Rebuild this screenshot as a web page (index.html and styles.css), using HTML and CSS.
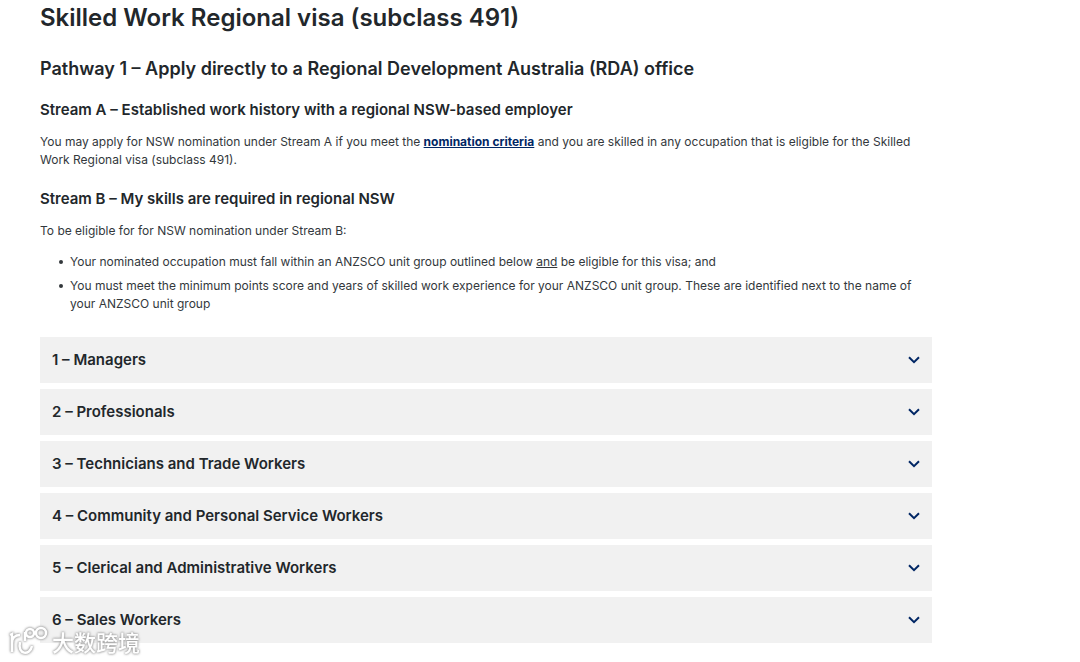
FILE: index.html
```html
<!DOCTYPE html>
<html lang="en">
<head>
  <meta charset="UTF-8">
  <meta name="viewport" content="width=device-width, initial-scale=1.0">
  <title>Skilled Work Regional visa (subclass 491)</title>
  <link rel="stylesheet" href="styles.css">
</head>
<body>
  <main class="content">
    <h1>Skilled Work Regional visa (subclass 491)</h1>
    <h2>Pathway 1 – Apply directly to a Regional Development Australia (RDA) office</h2>

    <h3>Stream A – Established work history with a regional NSW-based employer</h3>
    <p>You may apply for NSW nomination under Stream A if you meet the <a href="#">nomination criteria</a> and you are skilled in any occupation that is eligible for the Skilled Work Regional visa (subclass 491).</p>

    <h3>Stream B – My skills are required in regional NSW</h3>
    <p>To be eligible for for NSW nomination under Stream B:</p>
    <ul>
      <li>Your nominated occupation must fall within an ANZSCO unit group outlined below <u>and</u> be eligible for this visa; and</li>
      <li>You must meet the minimum points score and years of skilled work experience for your ANZSCO unit group. These are identified next to the name of your ANZSCO unit group</li>
    </ul>

    <div class="accordion">
      <button type="button" class="accordion-title" aria-expanded="false">
        1 – Managers
        <svg class="chevron" viewBox="0 0 12 8" aria-hidden="true"><path d="M1 1.300 6 6.200l5-4.900"/></svg>
      </button>
      <button type="button" class="accordion-title" aria-expanded="false">
        2 – Professionals
        <svg class="chevron" viewBox="0 0 12 8" aria-hidden="true"><path d="M1 1.300 6 6.200l5-4.900"/></svg>
      </button>
      <button type="button" class="accordion-title" aria-expanded="false">
        3 – Technicians and Trade Workers
        <svg class="chevron" viewBox="0 0 12 8" aria-hidden="true"><path d="M1 1.300 6 6.200l5-4.900"/></svg>
      </button>
      <button type="button" class="accordion-title" aria-expanded="false">
        4 – Community and Personal Service Workers
        <svg class="chevron" viewBox="0 0 12 8" aria-hidden="true"><path d="M1 1.300 6 6.200l5-4.900"/></svg>
      </button>
      <button type="button" class="accordion-title" aria-expanded="false">
        5 – Clerical and Administrative Workers
        <svg class="chevron" viewBox="0 0 12 8" aria-hidden="true"><path d="M1 1.300 6 6.200l5-4.900"/></svg>
      </button>
      <button type="button" class="accordion-title" aria-expanded="false">
        6 – Sales Workers
        <svg class="chevron" viewBox="0 0 12 8" aria-hidden="true"><path d="M1 1.300 6 6.200l5-4.900"/></svg>
      </button>
    </div>
  </main>

  <div class="watermark">
    <svg class="watermark-logo" viewBox="0 0 40 30" aria-hidden="true">
      <path d="M2 9 4 8V26M4 17C4 12 7 9 12 9M12 16C9 29 22 30 24 20"/>
      <path d="M17 15V6"/>
      <circle cx="22" cy="7" r="4"/>
      <circle cx="33" cy="7" r="5"/>
    </svg>
    <span>大数跨境</span>
  </div>
</body>
</html>
```

FILE: styles.css
```css
* {
  box-sizing: border-box;
}
body {
  margin: 0;
  background-color: #fff;
  color: #22272b;
  font-family: Inter, "Liberation Sans", sans-serif;
  font-size: 12px;
  line-height: 18px;
  position: relative;
}
.content {
  max-width: 932px;
  padding: 3px 0 20px 40px;
}
h1, h2, h3, p, ul {
  margin: 0;
}
h1 {
  font-size: 24px;
  line-height: 30px;
  font-weight: 600;
  margin-bottom: 24px;
}
h2 {
  font-size: 18px;
  line-height: 24px;
  font-weight: 600;
  margin-bottom: 19px;
}
h3 {
  font-size: 15px;
  line-height: 20px;
  font-weight: 600;
  margin-bottom: 13px;
}
p {
  color: #33383c;
  padding-right: 12px;
}
p + h3 {
  margin-top: 20px;
}
a {
  color: #002664;
  font-weight: 700;
}
ul {
  color: #33383c;
  margin-top: 13px;
  padding: 0 12px 0 30px;
  list-style: none;
}
li::before {
  content: "";
  float: left;
  width: 4px;
  height: 4px;
  margin: 7px 0 0 -11px;
  border-radius: 50%;
  background-color: #33383c;
}
li + li {
  margin-top: 6px;
}
.accordion {
  display: flex;
  flex-direction: column;
  gap: 6px;
  margin-top: 24px;
}
.accordion-title {
  display: flex;
  align-items: center;
  justify-content: space-between;
  min-height: 46px;
  padding: 12px;
  border: none;
  background-color: #f1f1f1;
  color: #22272b;
  font-family: inherit;
  font-size: 15px;
  font-weight: 600;
  line-height: 20px;
  text-align: left;
  cursor: pointer;
}
.chevron {
  width: 12px;
  height: 8px;
  fill: none;
  stroke: #002664;
  stroke-width: 2;
}
.watermark {
  position: absolute;
  left: 8px;
  bottom: 4px;
  display: flex;
  align-items: center;
  gap: 4px;
  color: #fff;
  font-family: "Noto Sans CJK SC", sans-serif;
  font-size: 22px;
  font-weight: 500;
  line-height: 36px;
  filter: drop-shadow(0 0 1px #999) drop-shadow(0 0 1px #bbb);
}
.watermark-logo {
  width: 40px;
  height: 30px;
  fill: none;
  stroke: #fff;
  stroke-width: 2.500;
}
```
